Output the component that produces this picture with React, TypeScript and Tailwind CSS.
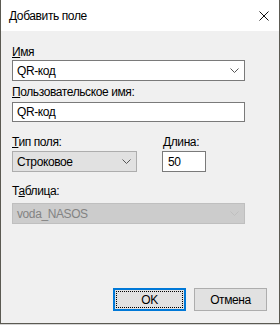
import React from "react";

const font = { fontFamily: '"Liberation Sans", "Noto Sans", sans-serif' };

function Chevron({ color }: { color: string }) {
  return (
    <svg width="9" height="5" viewBox="0 0 9 5" className="shrink-0">
      <path d="M0.5 0.5 L4.5 4.5 L8.5 0.5" fill="none" stroke={color} strokeWidth="1" />
    </svg>
  );
}

export default function App() {
  return (
    <div className="w-[280px] h-[325px] bg-[#d4d4d4] text-[12px] tracking-[-0.4px] text-black" style={font}>
      <div className="h-[324px] border-l border-r border-b border-[#5b5a52] flex flex-col">
        <div className="h-[31px] bg-white flex items-center justify-between pl-[8px] pr-[10px] shrink-0">
          <span className="text-[12px] leading-[16px]">Добавить поле</span>
          <svg width="10" height="10" viewBox="0 0 10 10">
            <path d="M0.5 0.5 L9.5 9.5 M9.5 0.5 L0.5 9.5" stroke="#111" strokeWidth="1" />
          </svg>
        </div>
        <div className="flex-1 bg-[#f0f0f0] px-[11px] pt-[14px] flex flex-col">
          <div className="leading-[15px] h-[15px]"><u>И</u>мя</div>
          <div className="mt-0 h-[21px] w-[233px] bg-white border border-[#7a7a7a] flex items-center justify-between pl-[4px] pr-[5px]">
            <span className="leading-[16px]">QR-код</span>
            <Chevron color="#555" />
          </div>
          <div className="mt-[4px] leading-[15px] h-[15px]"><u>П</u>ользовательское имя:</div>
          <div className="mt-[2px] h-[20px] w-[233px] bg-white border border-[#7a7a7a] flex items-center pl-[4px]">
            <span className="leading-[16px]">QR-код</span>
          </div>
          <div className="mt-[13px] flex">
            <div className="flex flex-col w-[150px]">
              <div className="leading-[15px] h-[15px]"><u>Т</u>ип поля:</div>
              <div className="mt-[1px] h-[21px] w-[125px] bg-[#e1e1e1] border border-[#adadad] flex items-center justify-between pl-[4px] pr-[5px]">
                <span className="leading-[16px]">Строковое</span>
                <Chevron color="#555" />
              </div>
            </div>
            <div className="flex flex-col">
              <div className="leading-[15px] h-[15px] ml-[1px]"><u>Д</u>лина:</div>
              <div className="mt-[1px] h-[21px] w-[44px] bg-white border border-[#7a7a7a] flex items-center pl-[5px]">
                <span className="leading-[16px]">50</span>
              </div>
            </div>
          </div>
          <div className="mt-[12px] leading-[15px] h-[15px]">Т<u>а</u>блица:</div>
          <div className="mt-[4px] h-[21px] w-[233px] bg-[#cccccc] border border-[#bfbfbf] flex items-center justify-between pl-[4px] pr-[5px]">
            <span className="leading-[16px] text-[#838383]">voda_NASOS</span>
            <Chevron color="#bfbfbf" />
          </div>
          <div className="flex-1" />
          <div className="flex justify-end gap-[8px] mb-[12px] pr-[1px]">
            <div className="w-[73px] h-[23px] bg-[#e1e1e1] border-2 border-[#0078d7] p-[1px]">
              <div className="w-full h-full border border-dotted border-black flex items-center justify-center">
                <span className="leading-[16px]">OK</span>
              </div>
            </div>
            <div className="w-[73px] h-[23px] bg-[#e1e1e1] border border-[#adadad] flex items-center justify-center">
              <span className="leading-[16px]">Отмена</span>
            </div>
          </div>
        </div>
      </div>
    </div>
  );
}
